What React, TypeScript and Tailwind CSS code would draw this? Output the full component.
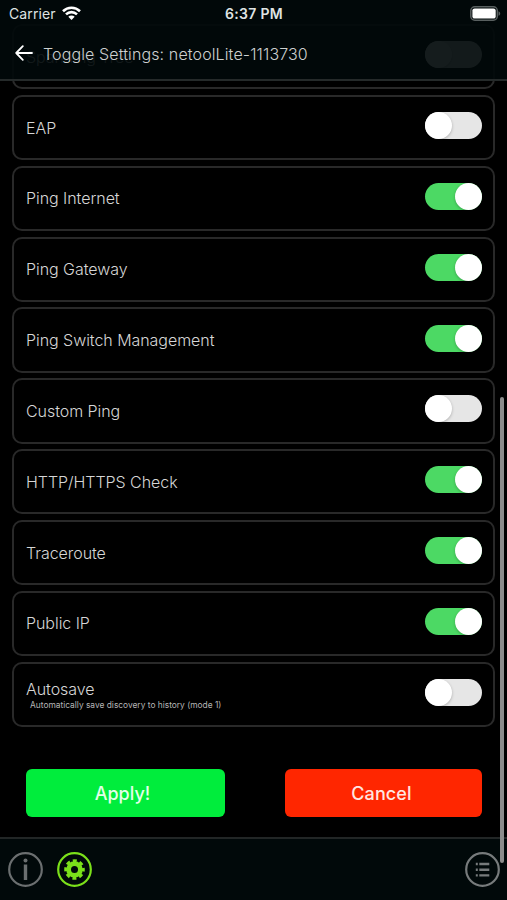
import React, { useState } from 'react';

interface Setting {
  id: string;
  label: string;
  hint?: string;
  enabled: boolean;
}

const INITIAL_SETTINGS: Setting[] = [
  { id: 'spanning', label: 'Spanning Tree', enabled: false },
  { id: 'eap', label: 'EAP', enabled: false },
  { id: 'ping-internet', label: 'Ping Internet', enabled: true },
  { id: 'ping-gateway', label: 'Ping Gateway', enabled: true },
  { id: 'ping-switch', label: 'Ping Switch Management', enabled: true },
  { id: 'custom-ping', label: 'Custom Ping', enabled: false },
  { id: 'http', label: 'HTTP/HTTPS Check', enabled: true },
  { id: 'traceroute', label: 'Traceroute', enabled: true },
  { id: 'public-ip', label: 'Public IP', enabled: true },
  { id: 'autosave', label: 'Autosave', hint: 'Automatically save discovery to history (mode 1)', enabled: false },
];

const Toggle: React.FC<{ on: boolean; label: string; onClick: () => void }> = ({ on, label, onClick }) => (
  <button
    role="switch"
    aria-checked={on}
    aria-label={label}
    onClick={onClick}
    className={
      'flex w-[57.5px] h-[27px] rounded-full shrink-0 mb-[4px] ' +
      (on ? 'bg-[#4cd964] justify-end' : 'bg-[#e6e6e6] justify-start')
    }
  >
    <span className="block size-[27px] rounded-full bg-white shadow-[0_1px_3px_rgba(0,0,0,0.25)]" />
  </button>
);

const SettingCard: React.FC<{ setting: Setting; onToggle: () => void }> = ({ setting, onToggle }) => (
  <div className="h-[65.35px] shrink-0 flex items-center justify-between rounded-[10px] border-2 border-[#292929] pl-[12px] pr-[11px]">
    <div className={setting.hint ? 'pt-[1px]' : ''}>
      <p className="text-[16px] leading-[20px] font-light tracking-[-0.05px] text-[#d6d6d6]">{setting.label}</p>
      {setting.hint && (
        <p className="pl-[4px] pt-[1px] text-[8.4px] leading-[11px] text-[#b5b5b5] whitespace-nowrap">{setting.hint}</p>
      )}
    </div>
    <Toggle on={setting.enabled} label={setting.label} onClick={onToggle} />
  </div>
);

const StatusBar: React.FC = () => (
  <div className="grid grid-cols-3 items-center h-[27px] pl-[9px] pr-[6px] text-[#dfe3e3]">
    <div className="flex items-center gap-[6px] text-[14px] tracking-[0.1px]">
      <span>Carrier</span>
      <svg width="19" height="15" viewBox="0 0 19 15" fill="none" stroke="#fff" strokeWidth="2.6">
        <path d="M1 5.2a12.2 12.2 0 0 1 17 0" />
        <path d="M4 8.4a7.9 7.9 0 0 1 11 0" />
        <path d="M9.5 14 6.3 10.8a4.6 4.6 0 0 1 6.4 0Z" fill="#fff" stroke="none" />
      </svg>
    </div>
    <span className="text-center text-[14px] font-semibold tracking-[0.3px] pr-[2px]">6:37 PM</span>
    <svg className="justify-self-end" width="31" height="15" viewBox="0 0 31 15">
      <rect x="0.8" y="0.8" width="26.5" height="13.4" rx="4" fill="none" stroke="#596060" strokeWidth="1.5" />
      <rect x="2.4" y="2.4" width="23.3" height="10.2" rx="2.2" fill="#fff" />
      <path d="M28.5 5.2c2.3 1 2.3 3.6 0 4.6Z" fill="#596060" />
    </svg>
  </div>
);

export default function App() {
  const [settings, setSettings] = useState(INITIAL_SETTINGS);

  const toggle = (id: string) =>
    setSettings(prev => prev.map(s => (s.id === id ? { ...s, enabled: !s.enabled } : s)));

  return (
    <div className="relative w-full h-[900px] overflow-hidden bg-black font-[Inter,sans-serif]">
      {/* Scrolled list, runs underneath the header */}
      <main className="flex flex-col pt-[24px] pl-[12px] pr-[12px]">
        <div className="flex flex-col gap-[5.5px]">
          {settings.map(s => (
            <SettingCard key={s.id} setting={s} onToggle={() => toggle(s.id)} />
          ))}
        </div>
        <div className="flex justify-between mt-[42px] pl-[14px] pr-[13px]">
          <button className="w-[199px] h-[48px] rounded-[6px] bg-[#00ed3c] pr-[6px] pt-[1px] text-[18px] font-medium text-[#e4ffe9]">
            Apply!
          </button>
          <button className="w-[197px] h-[48px] rounded-[6px] bg-[#ff2600] pr-[4px] pt-[1px] text-[18px] font-medium tracking-[0.1px] text-[#ffe6e2]">
            Cancel
          </button>
        </div>
      </main>

      {/* Header */}
      <header className="absolute inset-x-0 top-0 h-[81px] border-b-2 border-[#252a2a] bg-[#01090a]/92">
        <StatusBar />
        <div className="flex items-center h-[53px] pl-[15px] gap-[10px]">
          <svg className="mb-[1px]" width="18" height="16" viewBox="0 0 18 16" fill="none" stroke="#fff" strokeWidth="1.8" strokeLinecap="round" strokeLinejoin="round">
            <path d="M17 8H1.2M7.8 1.2 1.2 8l6.6 6.8" />
          </svg>
          <h1 className="text-[16px] font-light tracking-[0.12px] text-[#cdd0d0]">Toggle Settings: netoolLite-1113730</h1>
        </div>
      </header>

      {/* Bottom bar */}
      <footer className="absolute inset-x-0 bottom-0 h-[63px] border-t-2 border-[#222626] bg-[#01090a] flex items-start justify-between pt-[13px] pl-[8px] pr-[7px]">
        <div className="flex gap-[14px]">
          <button aria-label="Info">
            <svg width="35" height="35" viewBox="0 0 35 35" fill="none" stroke="#6b6f70">
              <circle cx="17.5" cy="17.5" r="16.3" strokeWidth="2.2" />
              <circle cx="17.5" cy="8.6" r="2" fill="#6b6f70" stroke="none" />
              <path d="M17.5 12.5V28" strokeWidth="3.4" />
            </svg>
          </button>
          <button aria-label="Settings">
            <svg width="35" height="35" viewBox="0 0 35 35" fill="none" stroke="#7be01a">
              <circle cx="17.5" cy="17.5" r="16.3" strokeWidth="2.2" />
              <circle cx="17.5" cy="17.5" r="5.9" strokeWidth="4.8" />
              <circle cx="17.5" cy="17.5" r="8.7" strokeWidth="3.2" strokeDasharray="3.9 2.933" strokeDashoffset="1.95" />
            </svg>
          </button>
        </div>
        <button aria-label="Menu">
          <svg width="35" height="35" viewBox="0 0 35 35" fill="none" stroke="#777b7c">
            <circle cx="17.5" cy="17.5" r="16.3" strokeWidth="2.2" />
            <path d="M10.8 12h2M10.8 17.7h2M10.8 23.4h2M14.3 12h10M14.3 17.7h10M14.3 23.4h10" strokeWidth="2.4" />
          </svg>
        </button>
      </footer>

      {/* Scroll indicator */}
      <div className="absolute right-[3px] top-[397px] w-[4px] h-[466px] rounded-full bg-[#8c8c8c]" />
    </div>
  );
}
